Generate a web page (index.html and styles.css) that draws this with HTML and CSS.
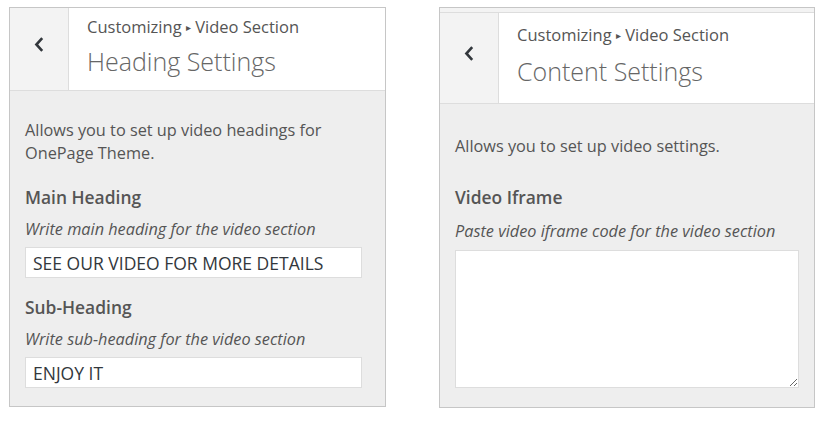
FILE: index.html
```html
<!DOCTYPE html>
<html>
<head>
<meta charset="utf-8">
<link rel="stylesheet" href="styles.css">
</head>
<body>
<div class="page">
  <section class="panel panel-left">
    <header class="head">
      <div class="back">
        <svg width="10" height="15" viewBox="0 0 10 15"><path d="M8.2 1.2 L2.4 7.5 L8.2 13.8" fill="none" stroke="#32373c" stroke-width="2.6"/></svg>
      </div>
      <div class="titles">
        <div class="crumb">Customizing <span class="tri">▸</span> Video Section</div>
        <h3 class="title">Heading Settings</h3>
      </div>
    </header>
    <div class="body">
      <p class="desc">Allows you to set up video headings for OnePage Theme.</p>
      <div class="field">
        <div class="label">Main Heading</div>
        <div class="hint">Write main heading for the video section</div>
        <input class="input" type="text" value="SEE OUR VIDEO FOR MORE DETAILS">
      </div>
      <div class="field">
        <div class="label">Sub-Heading</div>
        <div class="hint">Write sub-heading for the video section</div>
        <input class="input" type="text" value="ENJOY IT">
      </div>
    </div>
  </section>
  <section class="panel panel-right">
    <div class="strip"></div>
    <header class="head head-right">
      <div class="back">
        <svg width="10" height="15" viewBox="0 0 10 15"><path d="M8.2 1.2 L2.4 7.5 L8.2 13.8" fill="none" stroke="#32373c" stroke-width="2.6"/></svg>
      </div>
      <div class="titles">
        <div class="crumb">Customizing <span class="tri">▸</span> Video Section</div>
        <h3 class="title">Content Settings</h3>
      </div>
    </header>
    <div class="body body-right">
      <p class="desc">Allows you to set up video settings.</p>
      <div class="field">
        <div class="label">Video Iframe</div>
        <div class="hint">Paste video iframe code for the video section</div>
        <textarea class="area"></textarea>
      </div>
    </div>
  </section>
</div>
</body>
</html>
```
FILE: styles.css
```css
* { box-sizing: border-box; }
html, body { margin: 0; padding: 0; background: #fff; }
body { font-family: "Open Sans", "Noto Sans", sans-serif; color: #555; }
.page {
  display: flex;
  align-items: flex-start;
  gap: 53px;
  padding: 7px 0 0 9px;
}
.panel {
  border: 1px solid #c6c6c6;
  background: #eee;
  display: flex;
  flex-direction: column;
}
.panel-left { width: 377px; height: 400px; }
.panel-right { width: 376px; height: 401px; }
.strip { height: 5px; background: #f3f3f3; border-bottom: 1px solid #ddd; }
.head {
  display: flex;
  height: 83px;
  background: #fff;
  border-bottom: 1px solid #ddd;
}
.head-right { height: 91px; }
.back {
  width: 59px;
  flex: none;
  background: #f3f3f3;
  border-right: 1px solid #ddd;
  display: flex;
  align-items: center;
  justify-content: center;
  padding-bottom: 10px;
}
.titles { padding: 9px 0 0 18px; }
.head-right .titles { padding-top: 12px; }
.crumb { font-size: 16.5px; line-height: 20px; color: #555; white-space: nowrap; }
.tri { font-size: 10px; position: relative; top: -2px; }
.title {
  margin: 7px 0 0;
  font-size: 25px;
  font-weight: 300;
  line-height: 30px;
  color: #666;
  white-space: nowrap;
}
.head-right .title { margin-top: 9px; }
.body { padding: 28px 20px 0 15px; }
.body-right { padding-top: 31px; }
.desc { margin: 0 0 20px; font-size: 16.3px; line-height: 23px; color: #555; }
.body-right .desc { margin-bottom: 27px; }
.field { margin-bottom: 17px; }
.label { font-size: 17.4px; font-weight: 600; line-height: 24px; color: #555; }
.hint { margin-top: 10px; font-size: 16.3px; font-style: italic; line-height: 20px; color: #555; white-space: nowrap; }
.body-right .hint { margin-top: 12px; }
.input {
  display: block;
  margin-top: 8px;
  width: 337px;
  height: 31px;
  border: 1px solid #ddd;
  background: #fff;
  font-family: "Open Sans", sans-serif;
  font-size: 17.5px;
  color: #32373c;
  padding: 0 7px;
  outline: none;
}
.area {
  display: block;
  margin-top: 9px;
  width: 344px;
  height: 138px;
  border: 1px solid #ddd;
  background: #fff;
  resize: vertical;
}
```
